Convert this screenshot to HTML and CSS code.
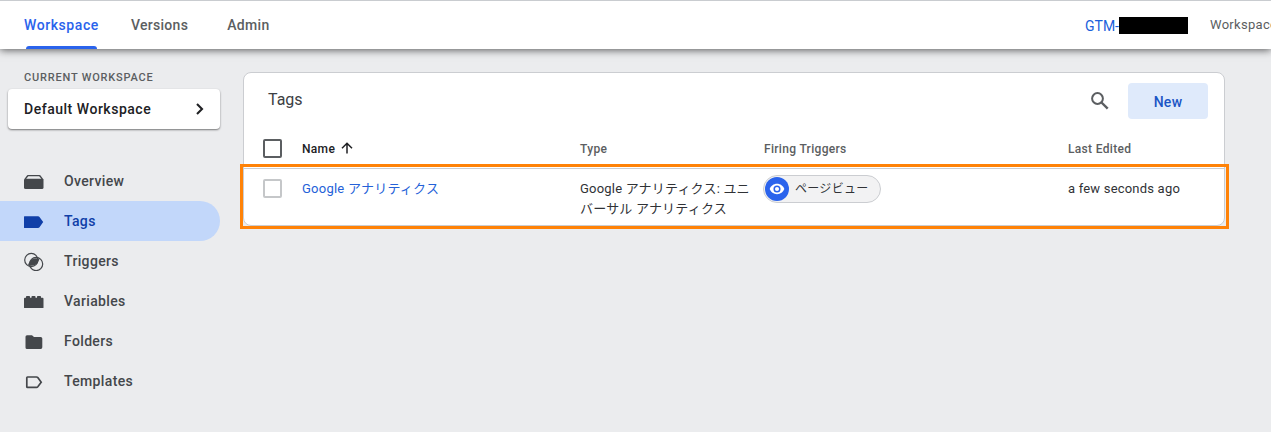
FILE: index.html
```html
<!DOCTYPE html>
<html lang="ja">
<head>
<meta charset="utf-8">
<title>Tags</title>
<link rel="stylesheet" href="styles.css">
</head>
<body>
<header class="topbar">
  <nav class="tabs">
    <a class="tab tab-active">Workspace</a>
    <a class="tab">Versions</a>
    <a class="tab tab-wide">Admin</a>
  </nav>
  <div class="container-id"><span>GTM-</span><span class="redacted"></span></div>
  <div class="ws-status">Workspace</div>
</header>
<div class="layout">
  <aside class="sidebar">
    <div class="ws-label">CURRENT WORKSPACE</div>
    <div class="ws-card">
      <span>Default Workspace</span>
      <svg width="10" height="14" viewBox="0 0 10 14"><path d="M2 2l5 5-5 5" fill="none" stroke="#202124" stroke-width="2.1"/></svg>
    </div>
    <nav class="menu">
      <a class="item"><svg width="20" height="20" viewBox="0 0 20 20"><path d="M0 8.500L3.200 4.300Q3.500 4 4 4H15.500Q16 4 16.300 4.300L19.500 8.500V16.500Q19.500 18 18 18H1.500Q0 18 0 16.500Z"/><path class="hole" d="M4.300 5.200H15.200L17.300 7.800H2.200Z"/></svg><span>Overview</span></a>
      <a class="item item-active"><svg width="20" height="20" viewBox="0 0 20 20"><path d="M.5 5.200H14Q15 5.200 15.500 5.900L19.200 11 15.500 16.200Q15 16.900 14 16.900H.5Q0 16.900 0 16.400V5.700Q0 5.200 .5 5.200Z"/></svg><span>Tags</span></a>
      <a class="item"><svg width="20" height="20" viewBox="0 0 20 20"><g fill="none" stroke="#44474b" stroke-width="1.200"><circle cx="7.300" cy="9" r="6.600"/><circle cx="12.100" cy="13" r="6.600"/></g><path d="M5.520 13.350A6.600 6.600 0 0 1 13.880 8.650 6.600 6.600 0 0 1 5.520 13.350Z" stroke="#44474b" stroke-width="2.400"/></svg><span>Triggers</span></a>
      <a class="item"><svg width="20" height="20" viewBox="0 0 20 20"><path d="M0 7.700Q0 6.700 1 6.700H2V5.800Q2 5 2.800 5H5.200Q6 5 6 5.800V6.700H7.500V5.800Q7.500 5 8.300 5H10.700Q11.500 5 11.500 5.800V6.700H13V5.800Q13 5 13.800 5H16.200Q17 5 17 5.800V6.700H18.500Q19.500 6.700 19.500 7.700V16.500Q19.500 17 19 17H.5Q0 17 0 16.500Z"/></svg><span>Variables</span></a>
      <a class="item"><svg width="20" height="20" viewBox="0 0 20 20"><path d="M3 4.200H8L10 6H16.700Q18.300 6 18.300 7.500V16.300Q18.300 18 16.700 18H3Q1.500 18 1.500 16.500V5.700Q1.500 4.200 3 4.200Z"/></svg><span>Folders</span></a>
      <a class="item"><svg width="20" height="20" viewBox="0 0 20 20"><path d="M3.500 6H12.500Q13.300 6 13.800 6.600L17.200 11.200 13.800 15.800Q13.300 16.400 12.500 16.400H3.500Q2.800 16.400 2.800 15.700V6.700Q2.800 6 3.500 6Z" fill="none" stroke="#44474b" stroke-width="1.700"/></svg><span>Templates</span></a>
    </nav>
  </aside>
  <main class="main">
    <section class="card">
      <div class="card-head">
        <h1>Tags</h1>
        <svg class="search" width="20" height="20" viewBox="0 0 20 20"><circle cx="7.500" cy="7.500" r="5.400" fill="none" stroke="#5b5e61" stroke-width="2"/><path d="M11.500 11.500l6.200 6.200" stroke="#5b5e61" stroke-width="2.400"/></svg>
        <button class="new">New</button>
      </div>
      <div class="row head">
        <span class="check"></span>
        <span class="name">Name <svg width="12" height="12" viewBox="0 0 12 12"><path d="M6 11.500V1.500M1 6.300L6 1.300 11 6.300" fill="none" stroke="#202124" stroke-width="1.500"/></svg></span>
        <span>Type</span>
        <span>Firing Triggers</span>
        <span>Last Edited</span>
      </div>
      <div class="row record">
        <span class="check"></span>
        <a class="link">Google アナリティクス</a>
        <span>Google アナリティクス: ユニ<br>バーサル アナリティクス</span>
        <span class="chip"><span class="eye"><svg width="16" height="12" viewBox="0 0 16 12"><path d="M8 .8C4.600 .8 1.800 3 .7 6c1.100 3 3.900 5.200 7.300 5.200S14.200 9 15.300 6C14.200 3 11.400.8 8 .8Z" fill="#fff"/><circle cx="8" cy="6" r="2.800" fill="#fff" stroke="#2a63ec" stroke-width="1.500"/></svg></span><span>ページビュー</span></span>
        <span>a few seconds ago</span>
      </div>
      <div class="highlight"></div>
    </section>
  </main>
</div>
</body>
</html>
```
FILE: styles.css
```css
* { box-sizing: border-box; }
body {
  margin: 0;
  height: 432px;
  overflow: hidden;
  background: #ebecee;
  color: #3c4043;
  font-family: Roboto, "Noto Sans CJK JP", sans-serif;
}
svg { display: block; flex: none; }
.topbar {
  position: relative;
  display: flex;
  height: 49px;
  border-top: 1px solid #c9ccd0;
  background: #fff;
  box-shadow: 0 1px 8px rgba(0, 0, 0, .65);
  white-space: nowrap;
}
.tabs { display: flex; flex: none; gap: 32px; padding-left: 24px; width: 1085px; }
.tab { position: relative; font-size: 14px; font-weight: 500; line-height: 48px; letter-spacing: .3px; color: #5b5e61; }
.tab:first-child { letter-spacing: .57px; }
.tab:nth-child(2) { letter-spacing: .2px; }
.tab-wide { margin-left: 7px; letter-spacing: .35px; }
.tab:nth-child(2) { letter-spacing: .3px; }
.tab-active { color: #2a63ec; }
.tab-active::after {
  content: "";
  position: absolute;
  left: 2px;
  right: 2px;
  bottom: 0;
  height: 3px;
  border-radius: 3px 3px 0 0;
  background: #2a63ec;
}
.container-id { display: flex; flex: none; align-items: center; width: 125px; padding-top: 2px; font-size: 14px; color: #1a5fdb; }
.redacted { width: 69px; height: 17px; margin-top: -1px; background: #000; }
.ws-status { flex: none; font-size: 13px; line-height: 47px; letter-spacing: .3px; color: #5b5e61; }
.layout { display: flex; height: 383px; }
.sidebar { flex: none; width: 243px; padding-top: 20px; }
.ws-label { height: 20px; padding-left: 24px; font-size: 11px; line-height: 17px; font-weight: 500; letter-spacing: .8px; color: #5b5e61; }
.ws-card {
  display: flex;
  align-items: center;
  justify-content: space-between;
  width: 212px;
  height: 40px;
  margin-left: 8px;
  padding: 0 15px 0 16px;
  border-radius: 4px;
  background: #fff;
  box-shadow: 0 1px 2px rgba(0, 0, 0, .5);
  font-size: 14px;
  font-weight: 500;
  letter-spacing: .52px;
  color: #202124;
}
.menu { margin-top: 32px; }
.item {
  display: flex;
  align-items: center;
  gap: 20px;
  width: 220px;
  height: 40px;
  padding-left: 24px;
  border-radius: 0 20px 20px 0;
  font-size: 14px;
  font-weight: 500;
  letter-spacing: .35px;
  color: #44474b;
  fill: #44474b;
}
.item-active { background: #c2d7fa; color: #103fa8; fill: #103fa8; }
.hole { fill: #ebecee; }
.main { flex: none; padding-top: 23px; }
.card {
  position: relative;
  width: 982px;
  height: 154px;
  border: 1px solid #cbcdd1;
  border-radius: 8px;
  background: #fff;
}
.card-head { display: flex; align-items: center; height: 57px; padding: 0 16px 1px 24px; }
h1 { flex: 1; margin: -3px 0 0; font-size: 16px; font-weight: 400; line-height: 20px; color: #3c4043; }
.search { margin-right: 18px; }
.new {
  width: 80px;
  height: 36px;
  padding: 2px 0 0;
  border: 0;
  border-radius: 4px;
  background: #dfeafb;
  color: #1b55c5;
  font: 500 14px Roboto, sans-serif;
  letter-spacing: .3px;
}
.row { display: grid; grid-template-columns: 39px 278px 184px 304px 1fr; padding-left: 19px; }
.head {
  height: 39px;
  padding-bottom: 1px;
  align-items: center;
  border-bottom: 1px solid #cbcdd1;
  font-size: 12px;
  font-weight: 500;
  letter-spacing: .32px;
  color: #5b5e61;
}
.check { width: 19px; height: 19px; border: 2px solid #5b5e61; border-radius: 2px; }
.name { display: flex; gap: 6px; align-items: center; color: #202124; }
.name svg { margin-top: -2px; }
.record { align-items: start; padding-top: 10px; font-size: 13px; line-height: 20px; letter-spacing: .2px; color: #303236; }
.record .check { border-color: #c5c7c9; }
.link { color: #2461d8; letter-spacing: .24px; }
.chip {
  display: flex;
  align-items: center;
  gap: 6px;
  width: 118px;
  height: 28px;
  margin: -4px 0 0 -1px;
  padding-left: 1px;
  border: 1px solid #cbcdd1;
  border-radius: 14px;
  background: #f2f2f3;
  font-size: 12px;
  letter-spacing: .3px;
}
.eye { display: grid; place-items: center; width: 24px; height: 24px; border-radius: 50%; background: #2a63ec; }
.highlight { position: absolute; left: -4px; top: 91px; width: 989px; height: 65px; border: 3px solid #ff8207; }
```
